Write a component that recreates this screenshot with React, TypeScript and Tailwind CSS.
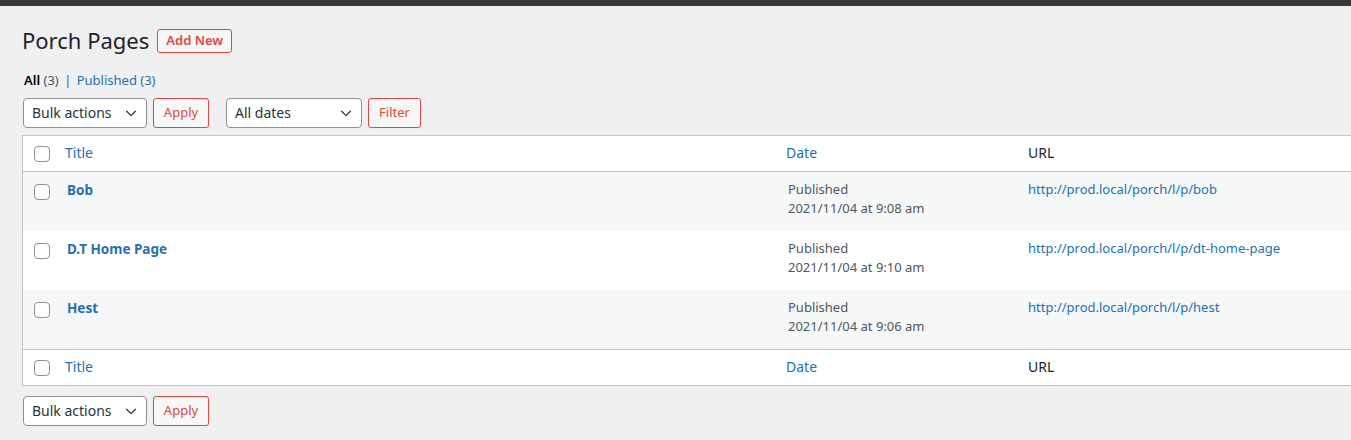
import React from "react";

const font = { fontFamily: '"Noto Sans", "Open Sans", sans-serif' };

function Chevron() {
  return (
    <svg
      xmlns="http://www.w3.org/2000/svg"
      viewBox="0 0 16 16"
      fill="none"
      stroke="#2c3338"
      strokeWidth={1.4}
      strokeLinecap="round"
      strokeLinejoin="round"
      className="w-[14px] h-[14px]"
    >
      <path d="M3 6l5 5 5-5" />
    </svg>
  );
}

function Select({ label, width }: { label: string; width: string }) {
  return (
    <div
      className={`flex items-center justify-between h-[30px] ${width} border border-[#8c8f94] rounded-[4px] bg-white pl-[8px] pr-[8px] pb-[1px] text-[14px] text-[#2c3338]`}
    >
      <span>{label}</span>
      <Chevron />
    </div>
  );
}

function RedButton({ label, width }: { label: string; width: string }) {
  return (
    <button
      type="button"
      className={`h-[30px] ${width} border border-[#e2463f] rounded-[3px] bg-[#f6f7f7] text-[13px] text-[#e2463f]`}
    >
      {label}
    </button>
  );
}

function Checkbox() {
  return (
    <div className="w-[16px] h-[16px] border border-[#8c8f94] rounded-[4px] bg-white" />
  );
}

const rows = [
  { title: "Bob", date: "2021/11/04 at 9:08 am", url: "http://prod.local/porch/l/p/bob" },
  { title: "D.T Home Page", date: "2021/11/04 at 9:10 am", url: "http://prod.local/porch/l/p/dt-home-page" },
  { title: "Hest", date: "2021/11/04 at 9:06 am", url: "http://prod.local/porch/l/p/hest" },
];

function HeadRow({ border }: { border: string }) {
  return (
    <div className={`flex h-[36px] items-center bg-white ${border} border-[#c3c4c7]`}>
      <div className="w-[42px] pl-[11px] flex items-center">
        <Checkbox />
      </div>
      <div className="w-[711px] pb-[2px] text-[14px] text-[#2271b1]">Title</div>
      <div className="w-[242px] pl-[10px] pb-[2px] text-[14px] text-[#2271b1]">Date</div>
      <div className="flex-1 pl-[10px] pb-[2px] text-[14px] text-[#1d2327]">URL</div>
    </div>
  );
}

export default function App() {
  return (
    <div className="w-full h-[440px] overflow-hidden bg-[#f0f0f1]" style={font}>
      <div className="h-[6px] bg-[#33383d]" />
      <div className="pl-[22px]">
        <div className="flex items-center gap-[8px] pt-[20px]">
          <h1 className="text-[22px] leading-[29px] text-[#1d2327]">Porch Pages</h1>
          <button
            type="button"
            className="h-[24px] px-[8px] border border-[#e2463f] rounded-[3px] bg-[#f6f7f7] text-[13px] font-semibold text-[#e2463f]"
          >
            Add New
          </button>
        </div>

        <div className="mt-[15px] text-[13px] leading-[20px] text-[#50575e] pl-[2px]">
          <span className="font-semibold text-black">All</span> (3){" "}
          <span className="text-[#50575e] px-[2px]">|</span>{" "}
          <span className="text-[#2271b1]">Published (3)</span>
        </div>

        <div className="flex items-center mt-[8px] pl-[1px]">
          <Select label="Bulk actions" width="w-[124px]" />
          <div className="w-[6px]" />
          <RedButton label="Apply" width="w-[56px]" />
          <div className="w-[17px]" />
          <Select label="All dates" width="w-[136px]" />
          <div className="w-[6px]" />
          <RedButton label="Filter" width="w-[53px]" />
        </div>

        <div className="mt-[7px] w-[1360px] border border-[#c3c4c7] bg-white">
          <HeadRow border="border-b" />
          {rows.map((r, i) => (
            <div
              key={r.title}
              className={`flex h-[59px] items-start ${i % 2 === 0 ? "bg-[#f6f7f7]" : "bg-white"}`}
            >
              <div className="w-[42px] pl-[11px] pt-[12px]">
                <Checkbox />
              </div>
              <div className="w-[711px] pl-[2px] pt-[8px] text-[13.5px] leading-[20px] font-bold text-[#2271b1]">
                {r.title}
              </div>
              <div className="w-[242px] pl-[12px] pt-[8px] text-[13px] leading-[19px] text-[#50575e]">
                <div>Published</div>
                <div>{r.date}</div>
              </div>
              <div className="flex-1 pl-[10px] pt-[8px] text-[13px] leading-[19px] text-[#2271b1]">
                {r.url}
              </div>
            </div>
          ))}
          <HeadRow border="border-t" />
        </div>

        <div className="flex items-center mt-[10px] pl-[1px]">
          <Select label="Bulk actions" width="w-[124px]" />
          <div className="w-[6px]" />
          <RedButton label="Apply" width="w-[56px]" />
        </div>
      </div>
    </div>
  );
}
